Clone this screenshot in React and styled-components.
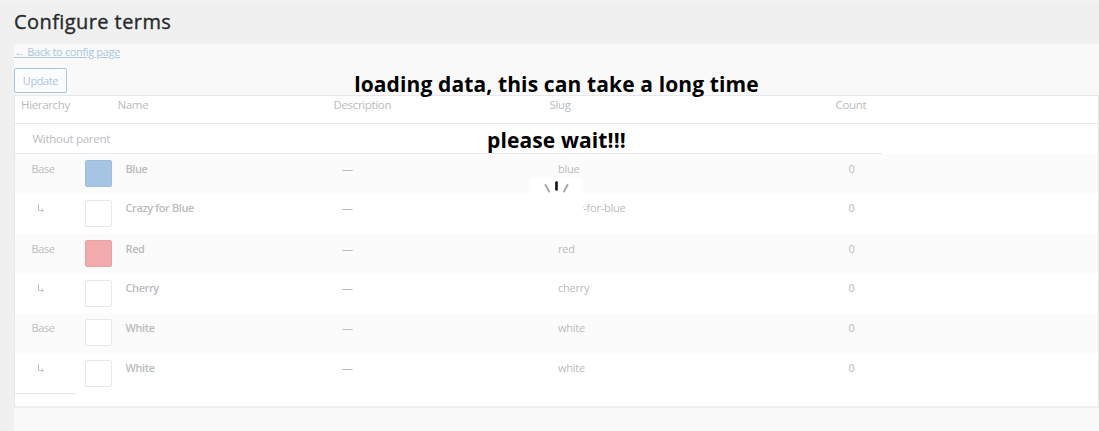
import React from "react";
import styled, { createGlobalStyle } from "styled-components";

const GlobalStyle = createGlobalStyle`
  * { box-sizing: border-box; }
  html, body { margin: 0; padding: 0; }
  body {
    background: #f0f0f0;
    font-family: "Open Sans", "Noto Sans", sans-serif;
    font-size: 11px;
    color: #b9bcbf;
    overflow: hidden;
  }
`;

const Page = styled.div`
  width: 1099px;
  height: 431px;
  overflow: hidden;
  padding-left: 14px;
  display: flex;
  flex-direction: column;
  border-top: 1px solid #f1f3f5;
`;

const Title = styled.h1`
  margin: 0;
  height: 43px;
  line-height: 42px;
  font-size: 20px;
  font-weight: 500;
  letter-spacing: 0.42px;
  color: #27292c;
  -webkit-text-stroke: 0.35px #27292c;
`;

const Content = styled.main`
  position: relative;
  flex: 1;
  display: flex;
  flex-direction: column;
  align-items: flex-start;
  background: #f9f9f9;
`;

const BackLink = styled.a`
  height: 24px;
  line-height: 16px;
  font-size: 11px;
  letter-spacing: -0.35px;
  color: #a8c6de;
  text-decoration: underline;
  text-underline-offset: 1px;
`;

const Button = styled.button`
  width: 53px;
  height: 25px;
  padding: 0;
  border: 1px solid #a5c8e2;
  border-radius: 2px;
  background: #fbfcfd;
  color: #a8c6de;
  font: inherit;
  letter-spacing: -0.4px;
`;

const Table = styled.section`
  width: 1085px;
  height: 313px;
  margin-top: 2px;
  border: 1px solid #e6e7e8;
  border-bottom-width: 2px;
  border-bottom-color: #eeeeef;
  background: #fff;
`;

const Columns = styled.div`
  display: grid;
  grid-template-columns: 102.5px 216px 216px 286px 1fr;
`;

const HeadRow = styled(Columns)`
  height: 28px;
  border-bottom: 1px solid #e6e7e8;
  line-height: 17px;
  font-size: 11.5px;
  letter-spacing: -0.34px;
`;

const HeadCell = styled.div`
  padding-left: ${(p) => (p.$first ? 6 : 0)}px;
`;

const GroupLabel = styled.div`
  width: 867px;
  height: 30px;
  padding-left: 17.5px;
  border-bottom: 1px solid #e6e7e8;
  line-height: 29px;
  font-size: 11.5px;
  letter-spacing: -0.28px;
`;

const Row = styled.div`
  display: grid;
  grid-template-columns: 69.5px 41px 216.5px 216px 290.5px 1fr;
  height: ${(p) => p.$height}px;
  background: ${(p) => (p.$striped ? "#fbfbfb" : "#fff")};
  line-height: 29px;
`;

const Level = styled.div`
  display: flex;
  justify-content: center;
  align-items: flex-start;
  width: ${(p) => (p.$child ? 52 : 56)}px;
  letter-spacing: -0.35px;
`;

const ChildArrow = styled.svg`
  margin-top: 11px;
`;

const Swatch = styled.div`
  width: 27px;
  height: 27px;
  margin-top: ${(p) => (p.$child ? 7 : 6)}px;
  border: 1px solid ${(p) => p.$border};
  border-radius: 2px;
  background: ${(p) => p.$fill};
`;

const Name = styled.strong`
  font-weight: 600;
  letter-spacing: -0.4px;
`;

const Cell = styled.div`
  letter-spacing: -0.25px;
`;

const ShortRule = styled.div`
  width: 61px;
  height: 1px;
  background: #e6e7e8;
`;

const Loading = styled.div`
  position: absolute;
  inset: 0;
  display: flex;
  flex-direction: column;
  align-items: center;
  color: #000;
`;

const Message = styled.div`
  height: 56px;
  line-height: 56px;
  font-size: 21px;
  font-weight: 700;
  letter-spacing: 0.12px;
`;

const FirstMessage = styled(Message)`
  margin-top: 12px;
`;

const Spinner = styled.svg`
  display: block;
  margin-top: 10px;
  background: #fff;
`;

const terms = [
  { name: "Blue", slug: "blue", fill: "#a6c5e4", border: "#9dbddb", height: 39 },
  { child: true, name: "Crazy for Blue", slug: "crazy-for-blue", height: 41 },
  { name: "Red", slug: "red", fill: "#f1abad", border: "#e6a3a5", height: 39 },
  { child: true, name: "Cherry", slug: "cherry", height: 40 },
  { name: "White", slug: "white", height: 40 },
  { child: true, name: "White", slug: "white", height: 40 },
];

function TermRow({ term }) {
  return (
    <Row $height={term.height} $striped={!term.child}>
      <Level $child={term.child}>
        {term.child ? (
          <ChildArrow width="8" height="10" viewBox="0 0 8 10" fill="none" stroke="#b9bcbf">
            <path d="M1.5 0V6.5H6.5M4.5 4.5L6.5 6.5L4.5 8.5" strokeWidth="0.9" />
          </ChildArrow>
        ) : (
          "Base"
        )}
      </Level>
      <Swatch $child={term.child} $fill={term.fill || "#fff"} $border={term.border || "#e7e8e9"} />
      <Name>{term.name}</Name>
      <Cell>—</Cell>
      <Cell>{term.slug}</Cell>
      <Cell>0</Cell>
    </Row>
  );
}

export default function App() {
  return (
    <>
      <GlobalStyle />
      <Page>
        <Title>Configure terms</Title>
        <Content>
          <BackLink>← Back to config page</BackLink>
          <Button>Update</Button>
          <Table>
            <HeadRow>
              <HeadCell $first>Hierarchy</HeadCell>
              <HeadCell>Name</HeadCell>
              <HeadCell>Description</HeadCell>
              <HeadCell>Slug</HeadCell>
              <HeadCell>Count</HeadCell>
            </HeadRow>
            <GroupLabel>Without parent</GroupLabel>
            {terms.map((term, i) => (
              <TermRow key={i} term={term} />
            ))}
            <ShortRule />
          </Table>
          <Loading>
            <FirstMessage>loading data, this can take a long time</FirstMessage>
            <Message>please wait!!!</Message>
            <Spinner width="53" height="46" viewBox="0 0 53 46" fill="none" strokeLinecap="round">
              <path d="M26.5 4.5V11.5" stroke="#111" strokeWidth="2.6" />
              <path d="M15.5 7L19 13.5M37.5 7L34 13.5" stroke="#a8a8a8" strokeWidth="2" />
            </Spinner>
          </Loading>
        </Content>
      </Page>
    </>
  );
}
